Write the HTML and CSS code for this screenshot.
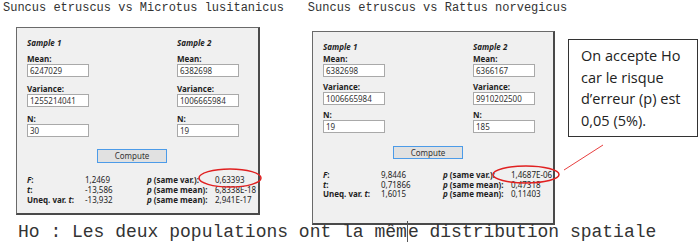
FILE: index.html
```html
<!DOCTYPE html>
<html lang="fr">

<head>
  <meta charset="UTF-8">
  <meta name="viewport" content="width=device-width, initial-scale=1.0">
  <title>Test F et t</title>
  <link rel="stylesheet" href="styles.css">
</head>

<body>
  <div class="page">
    <div class="titles">
      <div class="title">Suncus etruscus vs Microtus lusitanicus</div>
      <div class="title title-b">Suncus etruscus vs Rattus norvegicus</div>
    </div>

    <div class="panels">
      <!-- premier test -->
      <div class="panel">
        <div class="samples">
          <div class="sample">
            <div class="heading">Sample 1</div>
            <div class="field-label">Mean:</div>
            <div class="input">6247029</div>
            <div class="field-label">Variance:</div>
            <div class="input">1255214041</div>
            <div class="field-label">N:</div>
            <div class="input">30</div>
          </div>
          <div class="sample">
            <div class="heading">Sample 2</div>
            <div class="field-label">Mean:</div>
            <div class="input">6382698</div>
            <div class="field-label">Variance:</div>
            <div class="input">1006665984</div>
            <div class="field-label">N:</div>
            <div class="input">19</div>
          </div>
        </div>
        <div class="compute">Compute</div>
        <div class="results">
          <div class="lbl"><i>F</i>:</div>
          <div>1,2469</div>
          <div class="lbl"><i>p</i> (same var.):</div>
          <div>0,63393</div>
          <div class="lbl"><i>t</i>:</div>
          <div>-13,586</div>
          <div class="lbl"><i>p</i> (same mean):</div>
          <div>6,8338E-18</div>
          <div class="lbl">Uneq. var. <i>t</i>:</div>
          <div>-13,932</div>
          <div class="lbl"><i>p</i> (same mean):</div>
          <div>2,941E-17</div>
        </div>
      </div>

      <!-- second test -->
      <div class="panel panel-b">
        <div class="samples">
          <div class="sample">
            <div class="heading">Sample 1</div>
            <div class="field-label">Mean:</div>
            <div class="input">6382698</div>
            <div class="field-label">Variance:</div>
            <div class="input">1006665984</div>
            <div class="field-label">N:</div>
            <div class="input">19</div>
          </div>
          <div class="sample">
            <div class="heading">Sample 2</div>
            <div class="field-label">Mean:</div>
            <div class="input">6366167</div>
            <div class="field-label">Variance:</div>
            <div class="input">9910202500</div>
            <div class="field-label">N:</div>
            <div class="input">185</div>
          </div>
        </div>
        <div class="compute">Compute</div>
        <div class="results">
          <div class="lbl"><i>F</i>:</div>
          <div>9,8446</div>
          <div class="lbl"><i>p</i> (same var.):</div>
          <div>1,4687E-06</div>
          <div class="lbl"><i>t</i>:</div>
          <div>0,71866</div>
          <div class="lbl"><i>p</i> (same mean):</div>
          <div>0,47318</div>
          <div class="lbl">Uneq. var. <i>t</i>:</div>
          <div>1,6015</div>
          <div class="lbl"><i>p</i> (same mean):</div>
          <div>0,11403</div>
        </div>
      </div>
    </div>

    <div class="hypothesis">Ho : Les deux populations ont la mêm<span class="caret"></span>e distribution spatiale</div>

    <div class="callout">On accepte Ho car le risque d’erreur (p) est 0,05 (5%).</div>

    <svg class="marks" width="700" height="243" viewBox="0 0 700 243">
      <ellipse cx="230" cy="178" rx="31" ry="9" fill="none" stroke="#e02020" stroke-width="1.5" />
      <ellipse cx="526" cy="174.5" rx="33" ry="8.5" fill="none" stroke="#e02020" stroke-width="1.5" />
      <line x1="564" y1="170" x2="603" y2="145" stroke="#e84040" stroke-width="1" />
    </svg>
  </div>
</body>

</html>
```

FILE: styles.css
```css
* {
  margin: 0;
  padding: 0;
  box-sizing: border-box;
}

body {
  background: #fff;
  width: 700px;
  height: 243px;
  overflow: hidden;
}

.page {
  position: relative;
  height: 243px;
}

.titles {
  display: flex;
  padding: 1px 0 0 3px;
  font-family: "Liberation Mono", monospace;
  font-size: 12px;
  line-height: 14px;
  color: #333;
}

.title-b {
  margin-left: 24px;
}

.panels {
  display: flex;
  align-items: flex-start;
  padding: 12px 0 0 16px;
}

.panel {
  width: 244px;
  background: #f0f0f0;
  border: 1px solid #6a6a6a;
  border-right: 2px solid #4a4a4a;
  border-bottom: 2px solid #4a4a4a;
  padding: 9px 0 8px 10px;
  font-family: "Noto Sans", sans-serif;
  font-size: 8px;
  color: #1e1e1e;
  white-space: nowrap;
}

.panel-b {
  width: 243px;
  margin: 4px 0 0 52px;
  padding-bottom: 24px;
}

.samples {
  display: grid;
  grid-template-columns: 150px 1fr;
}

.heading {
  font-weight: bold;
  font-style: italic;
  line-height: 12px;
  margin-bottom: 4px;
}

.field-label {
  font-weight: bold;
  line-height: 11px;
}

.input {
  width: 62px;
  height: 13px;
  border: 1px solid #a9a9a9;
  background: #fff;
  padding-left: 2px;
  line-height: 11px;
  color: #333;
  margin-bottom: 6px;
}

.sample .input:last-child {
  margin-bottom: 0;
}

.compute {
  width: 70px;
  height: 14px;
  margin: 12px 0 0 70px;
  background: #e1e1e1;
  border: 1px solid #4c9be8;
  text-align: center;
  line-height: 12px;
  color: #333;
}

.results {
  display: grid;
  grid-template-columns: 58px 62px 68px 40px;
  margin-top: 12px;
  line-height: 10px;
}

.results .lbl {
  font-weight: bold;
}

.panel-b .heading {
  margin-bottom: 0;
}

.panel-b .input {
  margin-bottom: 4px;
}

.panel-b .compute {
  height: 13px;
  margin-top: 13px;
  line-height: 11px;
}

.panel-b .results {
  margin-top: 11px;
  line-height: 9.5px;
}

.hypothesis {
  margin: -4px 0 0 18px;
  font-family: "Liberation Mono", monospace;
  font-size: 18px;
  line-height: 18px;
  color: #333;
}

.caret {
  display: inline-block;
  width: 0;
  height: 21px;
  border-left: 1px solid #555;
  vertical-align: -5px;
}

.callout {
  position: absolute;
  left: 568px;
  top: 39px;
  width: 130px;
  height: 98px;
  border: 1px solid #333;
  background: #fff;
  padding: 5px 4px 0 12px;
  font-family: "Open Sans", sans-serif;
  font-size: 14.5px;
  line-height: 21.7px;
  color: #222;
}

.marks {
  position: absolute;
  left: 0;
  top: 0;
  pointer-events: none;
}
```
